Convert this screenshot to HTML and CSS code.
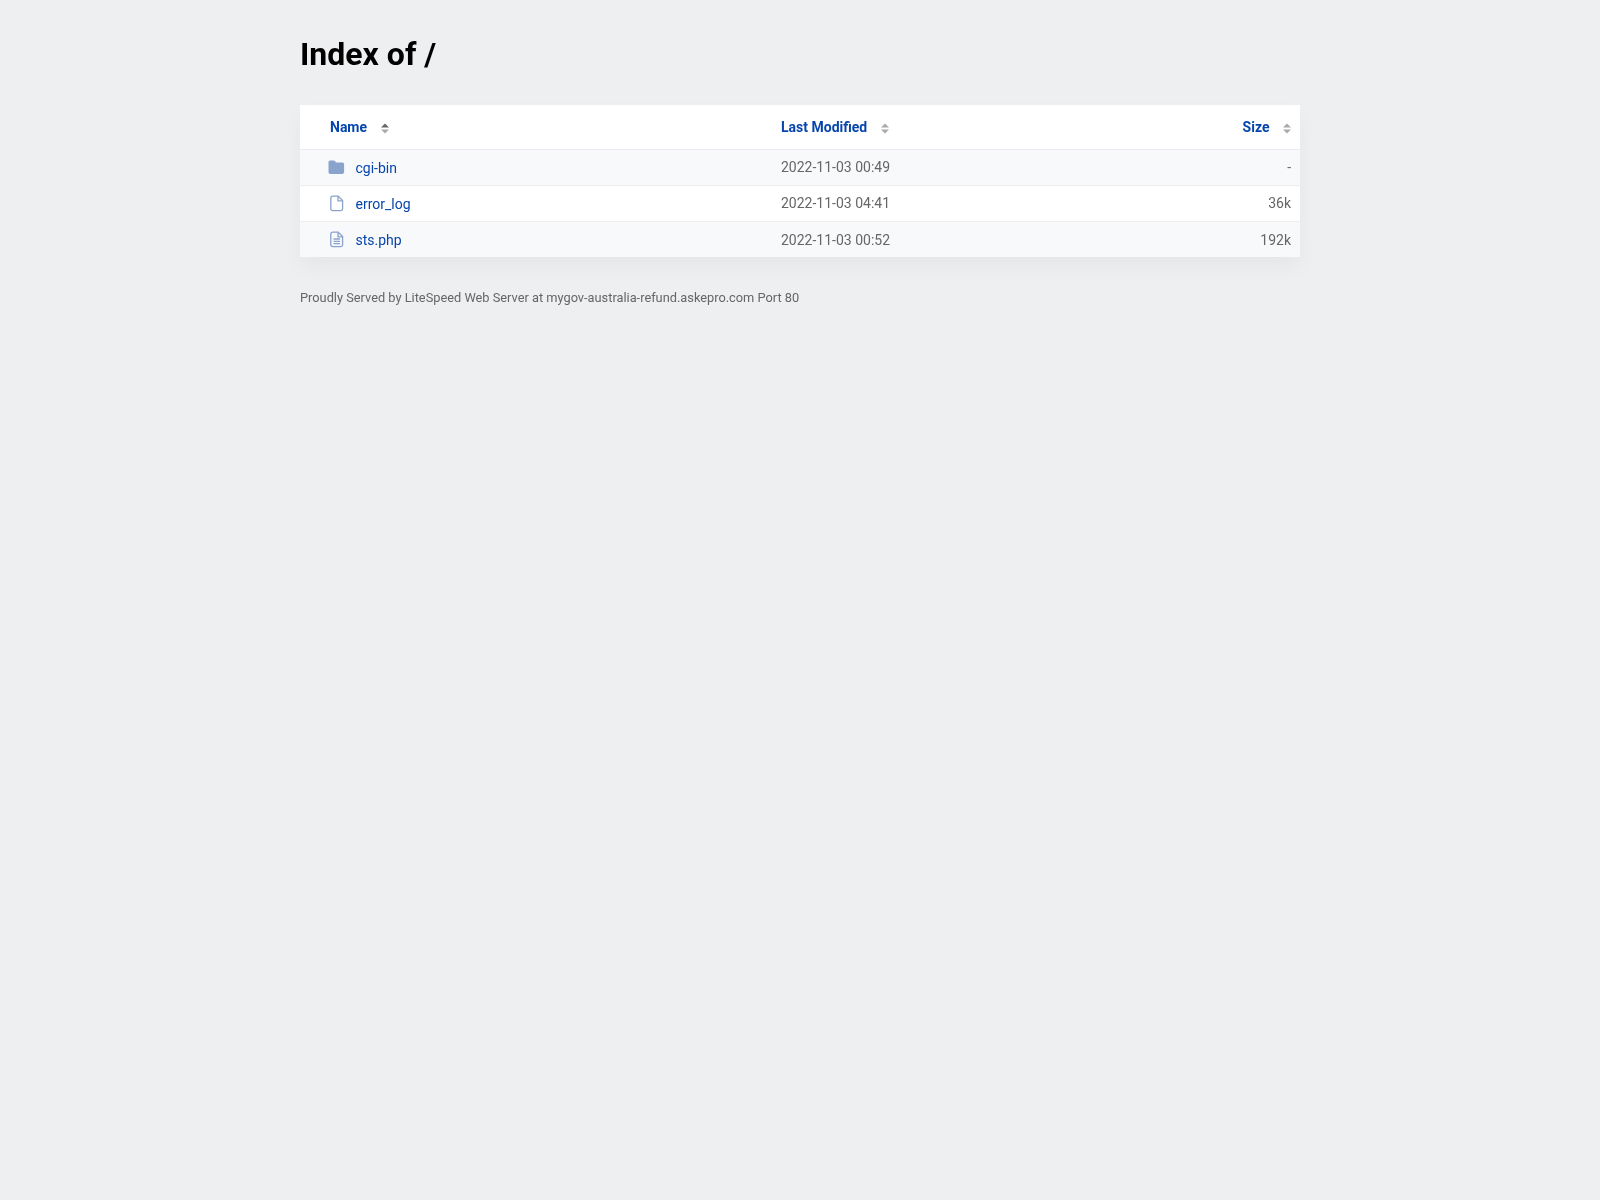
FILE: index.html
```html
<!DOCTYPE html>
<html lang="en">
<head>
    <meta charset="UTF-8">
    <title>Index of /</title>
    <link rel="stylesheet" href="styles.css">
</head>
<body>
    <div class="wrapper">
        <h1>Index of /</h1>

        <table class="listing">
            <thead>
                <tr>
                    <th class="col-name">
                        <a href="#name">Name</a>
                        <svg class="sort" width="8" height="11" viewBox="0 0 8 11"><path class="up active" d="M4 0.5 8 4.5H0Z"/><path class="down" d="M0 6.5H8L4 10.5Z"/></svg>
                    </th>
                    <th class="col-date">
                        <a href="#modified">Last Modified</a>
                        <svg class="sort" width="8" height="11" viewBox="0 0 8 11"><path class="up" d="M4 0.5 8 4.5H0Z"/><path class="down" d="M0 6.5H8L4 10.5Z"/></svg>
                    </th>
                    <th class="col-size">
                        <a href="#size">Size</a>
                        <svg class="sort" width="8" height="11" viewBox="0 0 8 11"><path class="up" d="M4 0.5 8 4.5H0Z"/><path class="down" d="M0 6.5H8L4 10.5Z"/></svg>
                    </th>
                </tr>
            </thead>
            <tbody>
                <tr>
                    <td class="col-name">
                        <svg class="icon" width="16" height="16" viewBox="0 0 16 16"><path class="fill" d="M1.2 0.4H5.2L7.2 2.4H13.3C14.3 2.4 15.1 3.2 15.1 4.2V12.1C15.1 13.1 14.3 13.9 13.3 13.9H1.2C0.2 13.9 -0.5 13.1 -0.5 12.1V2.2C-0.5 1.2 0.2 0.4 1.2 0.4Z"/></svg>
                        <a href="#cgi-bin">cgi-bin</a>
                    </td>
                    <td class="col-date raised">2022-11-03 00:49</td>
                    <td class="col-size raised">-</td>
                </tr>
                <tr>
                    <td class="col-name">
                        <svg class="icon" width="16" height="16" viewBox="0 0 16 16"><path class="line" d="M3.6 0.2H9.2L13.6 4.6V12.8C13.6 13.8 12.8 14.6 11.8 14.6H3.6C2.6 14.6 1.8 13.8 1.8 12.8V2C1.8 1 2.6 0.2 3.6 0.2Z"/><path class="line" d="M9 0.2V4.8H13.6"/></svg>
                        <a href="#error_log">error_log</a>
                    </td>
                    <td class="col-date raised">2022-11-03 04:41</td>
                    <td class="col-size raised">36k</td>
                </tr>
                <tr>
                    <td class="col-name">
                        <svg class="icon" width="16" height="16" viewBox="0 0 16 16"><path class="line" d="M3.6 0.2H9.2L13.6 4.6V12.8C13.6 13.8 12.8 14.6 11.8 14.6H3.6C2.6 14.6 1.8 13.8 1.8 12.8V2C1.8 1 2.6 0.2 3.6 0.2Z"/><path class="line" d="M9 0.2V4.8H13.6M4.5 7H11M4.5 9.3H11M4.5 11.6H11"/></svg>
                        <a href="#sts.php">sts.php</a>
                    </td>
                    <td class="col-date">2022-11-03 00:52</td>
                    <td class="col-size">192k</td>
                </tr>
            </tbody>
        </table>

        <address>Proudly Served by LiteSpeed Web Server at mygov-australia-refund.askepro.com Port 80</address>
    </div>
</body>
</html>
```

FILE: styles.css
```css
body {
    margin: 0;
    background-color: #eeeff1;
    color: #000;
    font-family: Roboto, "Liberation Sans", sans-serif;
    font-size: 14px;
}
.wrapper {
    width: 1000px;
    margin: 0 auto;
    padding-top: 36px;
    will-change: transform;
}
h1 {
    margin: 0 0 32px;
    font-size: 32px;
    line-height: 37px;
    font-weight: 700;
}
a {
    color: #0645ad;
    text-decoration: none;
}
.listing {
    width: 100%;
    border-collapse: collapse;
    table-layout: fixed;
    background-color: #fff;
    box-shadow: 0 10px 20px rgba(0,0,0,0.04);
}
.listing th {
    height: 44px;
    padding: 0;
    border-bottom: 1px solid #e9ebee;
    font-weight: 700;
    text-align: left;
}
.listing td {
    height: 35px;
    padding: 0;
    border-bottom: 1px solid #eceef0;
    color: #666;
}
.listing tbody tr:last-child td {
    border-bottom: 0;
}
.listing tbody tr:nth-child(odd) {
    background-color: #f8f9fb;
}
.col-name {
    width: 481px;
    padding-left: 30px !important;
    box-sizing: border-box;
}
.col-date {
    width: 350px;
}
.listing .col-size {
    text-align: right;
    padding-right: 9px;
}
.listing .raised {
    padding-bottom: 2px;
    height: 33px;
}
.sort {
    margin-left: 10px;
    vertical-align: -2px;
}
.sort path {
    fill: #aaa;
}
.sort .active {
    fill: #666;
}
td .icon {
    margin: 0 7px 0 -1px;
    vertical-align: -3px;
    overflow: visible;
}
.icon .fill {
    fill: #8aa3cc;
}
.icon .line {
    fill: none;
    stroke: #8aa3cc;
    stroke-width: 1.3;
}
address {
    margin-top: 33px;
    font-style: normal;
    font-size: 12.8px;
    color: #666;
}
```
